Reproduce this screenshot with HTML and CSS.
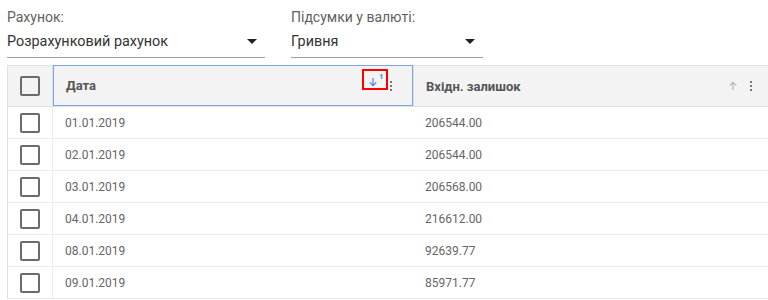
FILE: index.html
```html
<!DOCTYPE html>
<html lang="uk">
  <head>
    <meta charset="UTF-8" />
    <title>Рахунки</title>
    <link rel="stylesheet" href="styles.css">
  </head>
  <body>
    <div class="filters">
      <div class="field field-account">
        <div class="field-label">Рахунок:</div>
        <div class="select">
          <span>Розрахунковий рахунок</span>
          <span class="caret"></span>
        </div>
      </div>
      <div class="field field-currency">
        <div class="field-label">Підсумки у валюті:</div>
        <div class="select">
          <span>Гривня</span>
          <span class="caret"></span>
        </div>
      </div>
    </div>

    <div class="grid">
      <div class="row head">
        <div class="cell check"><span class="box"></span></div>
        <div class="cell date focused">
          <span class="title">Дата</span>
          <span class="sort active">
            <svg width="10" height="10" viewBox="0 0 10 10"><path d="M5 1v7.5M1.8 5.4 5 8.6 8.2 5.4" fill="none" stroke="#4a86e8" stroke-width="1.2"/></svg>
            <sup>1</sup>
          </span>
          <span class="menu"><i></i><i></i><i></i></span>
        </div>
        <div class="cell amount">
          <span class="title">Вхідн. залишок</span>
          <span class="sort">
            <svg width="10" height="10" viewBox="0 0 10 10"><path d="M5 9V1.5M1.8 4.6 5 1.4 8.2 4.6" fill="none" stroke="#b5b5b5" stroke-width="1.2"/></svg>
          </span>
          <span class="menu"><i></i><i></i><i></i></span>
        </div>
      </div>
      <div class="row">
        <div class="cell check"><span class="box"></span></div>
        <div class="cell date">01.01.2019</div>
        <div class="cell amount">206544.00</div>
      </div>
      <div class="row">
        <div class="cell check"><span class="box"></span></div>
        <div class="cell date">02.01.2019</div>
        <div class="cell amount">206544.00</div>
      </div>
      <div class="row">
        <div class="cell check"><span class="box"></span></div>
        <div class="cell date">03.01.2019</div>
        <div class="cell amount">206568.00</div>
      </div>
      <div class="row">
        <div class="cell check"><span class="box"></span></div>
        <div class="cell date">04.01.2019</div>
        <div class="cell amount">216612.00</div>
      </div>
      <div class="row">
        <div class="cell check"><span class="box"></span></div>
        <div class="cell date">08.01.2019</div>
        <div class="cell amount">92639.77</div>
      </div>
      <div class="row">
        <div class="cell check"><span class="box"></span></div>
        <div class="cell date">09.01.2019</div>
        <div class="cell amount">85971.77</div>
      </div>
    </div>
  </body>
</html>
```

FILE: styles.css
```css
body {
  margin: 0;
  padding: 9px 0 0 7px;
  font-family: Roboto, "Liberation Sans", sans-serif;
  background: #fff;
  overflow: hidden;
}
.filters {
  display: flex;
  gap: 26px;
}
.field-account {
  width: 258px;
}
.field-currency {
  width: 192px;
}
.field-label {
  font-size: 14px;
  line-height: 17px;
  color: #5f5f5f;
}
.select {
  display: flex;
  align-items: center;
  justify-content: space-between;
  height: 31px;
  border-bottom: 1px solid #9e9e9e;
  font-size: 14.4px;
  color: #333;
}
.caret {
  width: 0;
  height: 0;
  margin-right: 8px;
  border-left: 5px solid transparent;
  border-right: 5px solid transparent;
  border-top: 5px solid #222;
}

.grid {
  margin-top: 7px;
  width: 780px;
  border-left: 1px solid #e2e2e2;
  border-top: 1px solid #e2e2e2;
}
.row {
  display: flex;
  height: 32px;
  border-bottom: 1px solid #ececec;
  box-sizing: border-box;
  font-size: 12px;
  color: #666;
}
.row.head {
  height: 41px;
  background: #f3f3f3;
  border-bottom: 1px solid #e0e0e0;
  color: #555;
  font-weight: 700;
  font-size: 13px;
}
.cell {
  display: flex;
  align-items: center;
  box-sizing: border-box;
}
.check {
  width: 45px;
  justify-content: center;
  border-right: 1px solid #ececec;
}
.head .check {
  border-right-color: #e0e0e0;
}
.box {
  width: 16px;
  height: 16px;
  border: 2px solid #6b6b6b;
  border-radius: 2px;
}
.date {
  width: 360px;
  padding-left: 12px;
}
.amount {
  flex: 1;
  padding-left: 12px;
  padding-right: 28px;
}
.head .amount {
  border-left: 1px solid #e0e0e0;
}
.date.focused {
  border: 1px solid #7ba4ea;
  margin-top: -1px;
  height: 41px;
}
.title {
  flex: 1;
}
.sort {
  display: flex;
  align-items: center;
  flex-shrink: 0;
}
.sort.active {
  align-self: flex-start;
  margin-top: 3px;
  width: 26px;
  height: 21px;
  box-sizing: border-box;
  padding: 6px 0 0 4px;
  border: 2.5px solid #f00;
  align-items: flex-start;
}
.sort sup {
  font-size: 8px;
  line-height: 8px;
  margin: -4px 0 0 1px;
  color: #4a86e8;
  font-weight: 700;
}
.menu {
  display: flex;
  flex-direction: column;
  gap: 2px;
  margin: 0 20px 0 2px;
}
.amount .menu {
  margin: 0 8px 0 12px;
}
.menu i {
  display: block;
  width: 2px;
  height: 2px;
  background: #777;
}
```
